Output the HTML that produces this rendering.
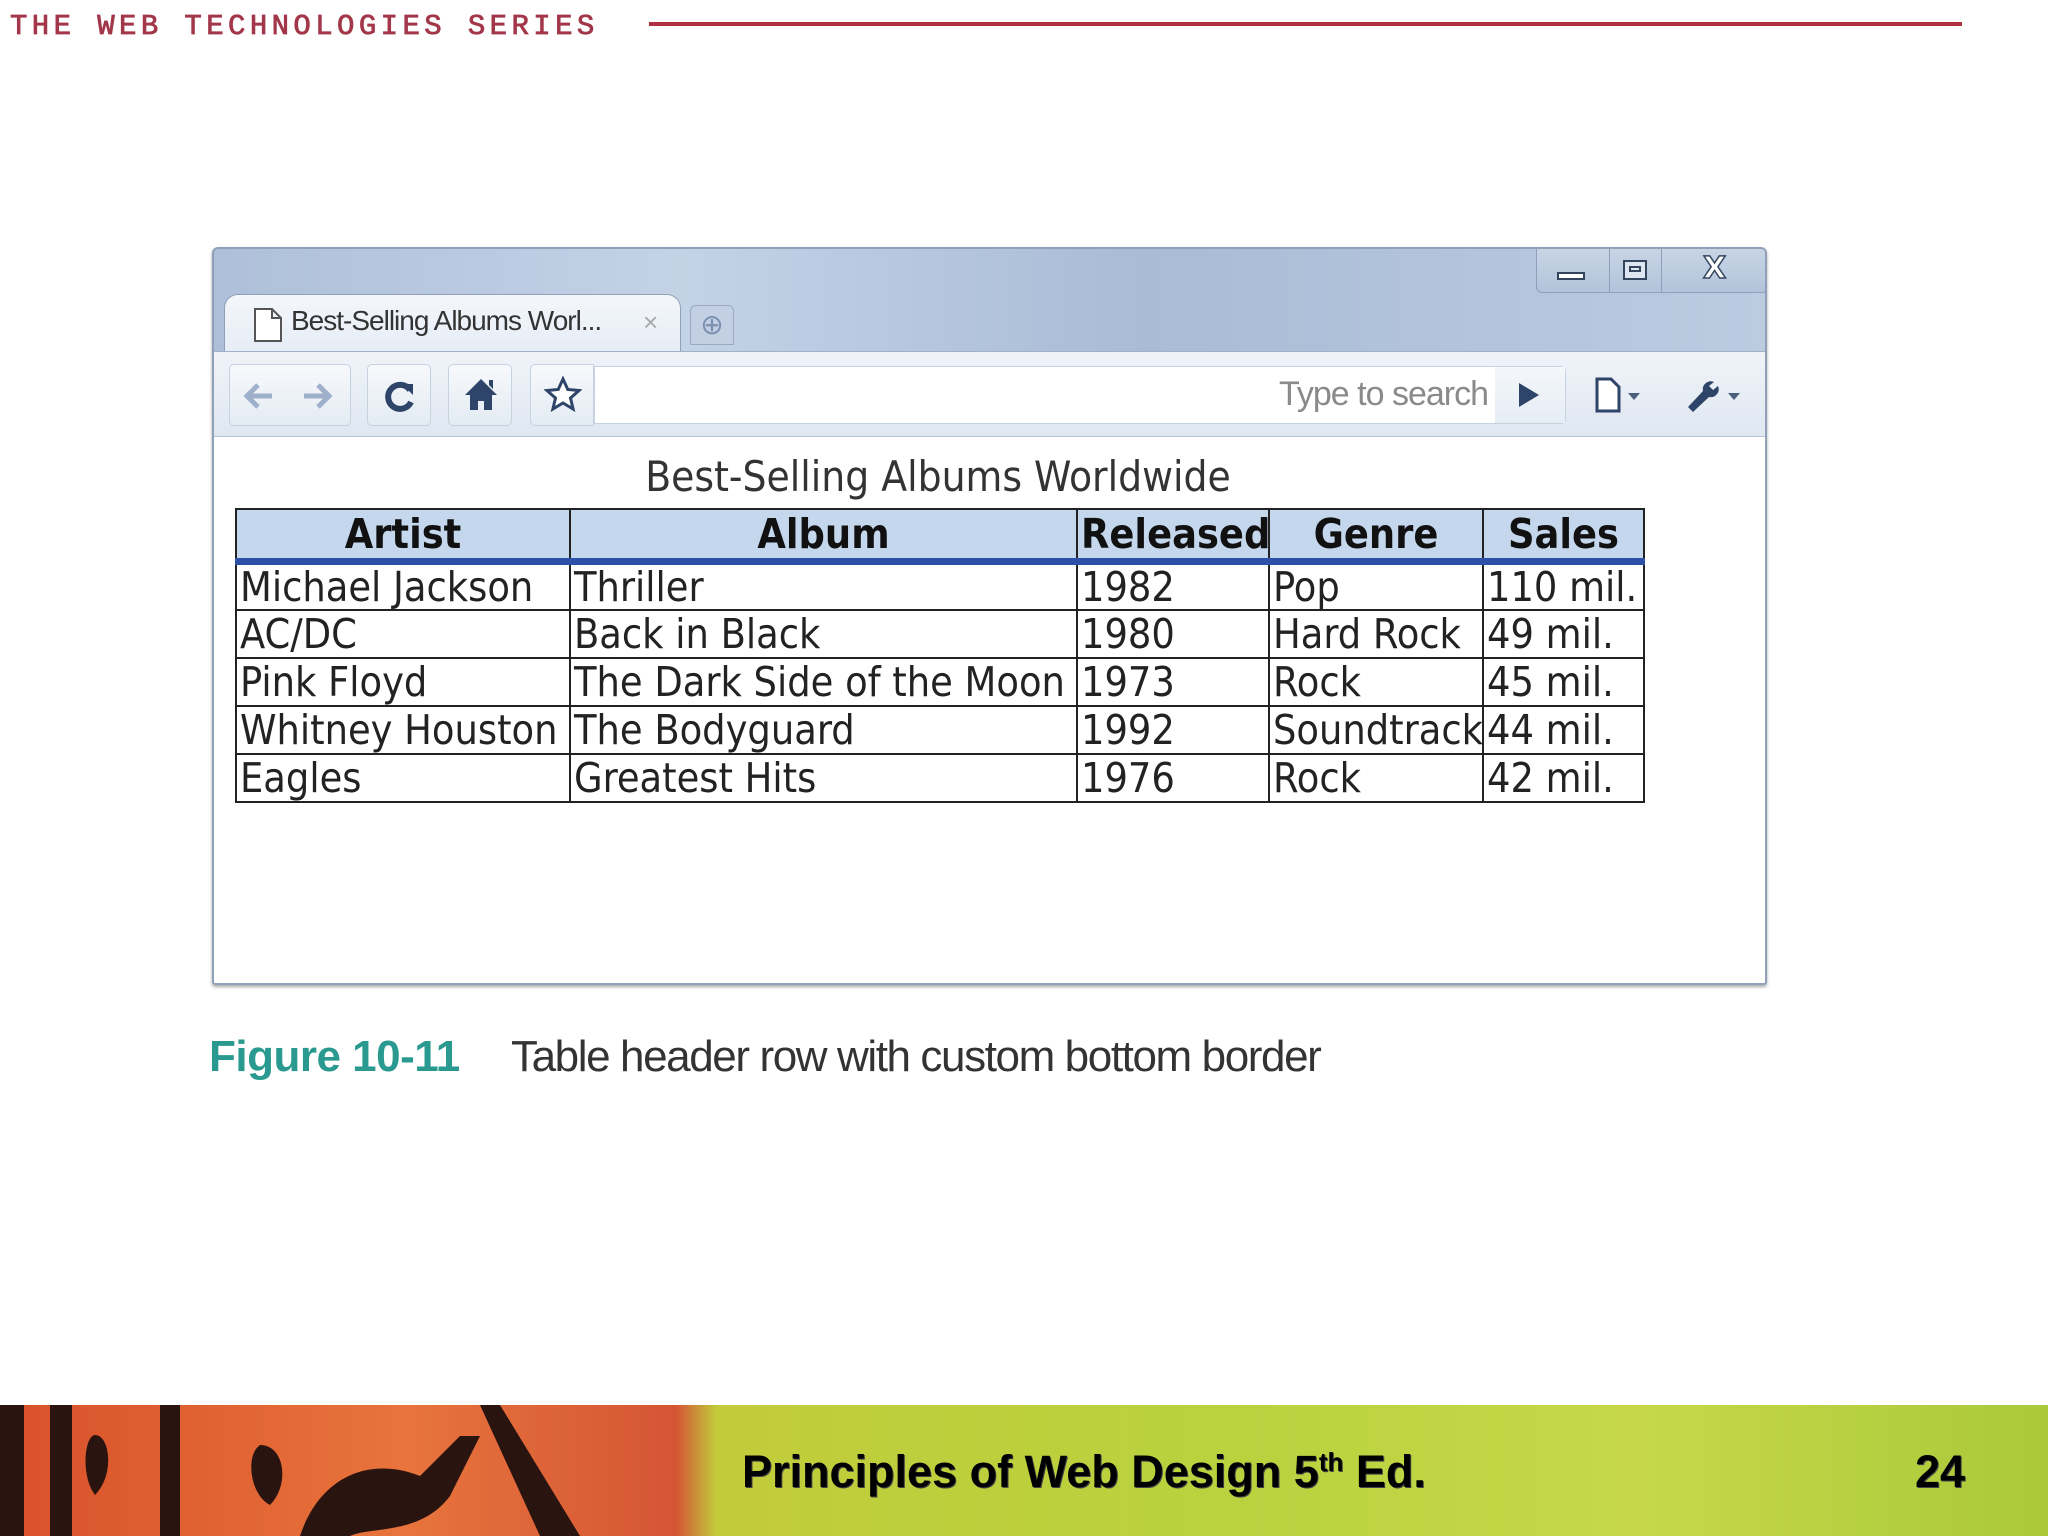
<!DOCTYPE html>
<html><head><meta charset="utf-8"><style>
*{margin:0;padding:0;box-sizing:border-box}
body{width:2048px;height:1536px;background:#fff;position:relative;overflow:hidden;font-family:"Liberation Sans",sans-serif}
.abs{position:absolute}
.hdr{left:10px;top:10px;font:29px "Liberation Mono",monospace;-webkit-text-stroke:0.8px #a3374a;letter-spacing:4.4px;color:#a3374a;white-space:nowrap}
.rline{left:649px;top:22px;width:1313px;height:4px;background:#b0303f}
.win{left:212px;top:247px;width:1555px;height:738px;border:2px solid #8fa0b8;border-radius:6px 6px 3px 3px;background:linear-gradient(90deg,#aebfd9,#c4d2e6 30%,#a9bbd6 60%,#bccbe0);overflow:hidden;box-shadow:0 2px 3px #aaa}
.ctrl{left:1322px;top:-2px;width:232px;height:46px;border:1px solid #8d9fba;border-top:none;border-radius:0 0 6px 6px;background:linear-gradient(#c9d5e6,#b3c3da)}
.tab{left:10px;top:45px;width:457px;height:58px;background:linear-gradient(#f4f7fb,#e6edf6);border:1px solid #8fa0b8;border-bottom:none;border-radius:14px 14px 0 0}
.tb{left:0;top:102px;width:1555px;height:86px;background:linear-gradient(#f0f4f9,#dfe7f1);border-top:1px solid #9fb0c8;border-bottom:1px solid #b8c6d8}
.btn{border:1px solid #c6d2e0;border-radius:5px;background:linear-gradient(#f7f9fc,#e4ebf3);height:62px;top:12px}
.omni{left:380px;top:14px;width:972px;height:58px;background:#fff;border:1px solid #c6d2e0;border-radius:0 5px 5px 0}
.content{left:0;top:188px;width:1555px;height:548px;background:#fff}
table{position:absolute;left:235px;top:508px;border-collapse:collapse;font-family:"DejaVu Sans Condensed","DejaVu Sans",sans-serif;font-size:41px;color:#222;table-layout:fixed}
td,th{border:2px solid #222;padding:0 3px;height:48px;line-height:44px;white-space:nowrap;text-align:left;overflow:hidden}
th{background:#c5d7ed;text-align:center;font-weight:bold;height:52px;border-bottom:7px solid #2c4fa7;color:#111}
.cap{left:540px;top:452px;font:42px "DejaVu Sans Condensed","DejaVu Sans",sans-serif;color:#333;width:796px;text-align:center}
.fig{top:1032px;font-size:44px;white-space:nowrap}
.footer{left:0;top:1405px;width:2048px;height:131px;background:linear-gradient(90deg,#d9502a 0,#e8743c 20%,#d45535 33%,#c2cc3a 35%,#b9d23e 60%,#c6d848 80%,#aac93a 100%)}
.ft{font-weight:bold;font-size:45px;color:#000;top:1446px;text-shadow:1px 1px 0 #444}
</style></head><body>
<div class="abs hdr">THE WEB TECHNOLOGIES SERIES</div>
<div class="abs rline"></div>

<div class="abs win">
 <div class="abs ctrl">
  <div class="abs" style="left:72px;top:0;width:1px;height:45px;background:#8d9fba"></div>
  <div class="abs" style="left:124px;top:0;width:1px;height:45px;background:#8d9fba"></div>
  <div class="abs" style="left:20px;top:25px;width:28px;height:8px;border:2px solid #34455e;background:#fff"></div>
  <div class="abs" style="left:86px;top:13px;width:24px;height:20px;border:2px solid #34455e;background:#dde5f0"><div style="margin:4px;height:6px;border:2px solid #34455e"></div></div>
  <div class="abs" style="left:166px;top:4px;font:bold 30px 'DejaVu Sans',sans-serif;color:#fff;-webkit-text-stroke:1.5px #34455e">X</div>
 </div>
 <div class="abs tab">
  <svg class="abs" style="left:28px;top:12px" width="30" height="36" viewBox="0 0 30 36"><path d="M2 2h17l9 9v23H2z M19 2v9h9" fill="#fff" stroke="#555" stroke-width="2"/></svg>
  <div class="abs" style="left:66px;top:10px;font-size:28px;color:#333;letter-spacing:-1px;white-space:nowrap">Best-Selling Albums Worl...</div>
  <div class="abs" style="left:418px;top:12px;font-size:26px;color:#aaa">×</div>
 </div>
 <div class="abs" style="left:476px;top:56px;width:44px;height:40px;border:1px solid #97a9c3;border-radius:6px 6px 0 0;background:#c3d0e3;color:#7b8fb0;font-size:28px;text-align:center;line-height:38px">⊕</div>
 <div class="abs tb">
  <div class="abs btn" style="left:15px;width:122px"></div>
  <svg class="abs" style="left:28px;top:28px" width="100" height="32"><path d="M30 16H6M16 5L5 16l11 11" fill="none" stroke="#9fb0ca" stroke-width="5"/><path d="M62 16h24M76 5l11 11-11 11" fill="none" stroke="#9fb0ca" stroke-width="5"/></svg>
  <div class="abs btn" style="left:153px;width:64px"></div>
  <svg class="abs" style="left:168px;top:26px" width="36" height="36"><path d="M28 12A12 12 0 1 0 29 24" fill="none" stroke="#2e4468" stroke-width="6"/><path d="M20 6h11v11z" fill="#2e4468"/></svg>
  <div class="abs btn" style="left:234px;width:64px"></div>
  <svg class="abs" style="left:248px;top:24px" width="38" height="38"><path d="M19 3L3 19h5v15h8v-9h6v9h8V19h5zM27 4h4v9l-4-4z" fill="#2e4468"/></svg>
  <div class="abs btn" style="left:316px;width:64px;border-radius:5px 0 0 5px"></div>
  <svg class="abs" style="left:330px;top:24px" width="38" height="38"><path d="M19 3l4.8 10.5 11.2 1-8.5 7.5 2.6 11-10.1-6-10.1 6 2.6-11L3 14.5l11.2-1z" fill="#fff" stroke="#2e4468" stroke-width="3"/></svg>
  <div class="abs omni">
   <div class="abs" style="left:684px;top:8px;font-size:34px;color:#8a8a8a;letter-spacing:-1px;white-space:nowrap">Type to search</div>
   <div class="abs" style="left:900px;top:0;width:70px;height:56px;background:linear-gradient(#f4f7fb,#e6edf5)"></div>
   <svg class="abs" style="left:922px;top:14px" width="24" height="28"><path d="M2 2l20 12L2 26z" fill="#2e4468"/></svg>
  </div>
  <svg class="abs" style="left:1380px;top:24px" width="60" height="40"><path d="M3 3h14l8 8v24H3z" fill="#fff" stroke="#2e4468" stroke-width="3"/><path d="M34 17h12l-6 7z" fill="#4a5d7c"/></svg>
  <svg class="abs" style="left:1470px;top:22px" width="70" height="42"><path d="M30 8a8 8 0 0 0-11 9L4 33l5 5 16-15a8 8 0 0 0 9-11l-5 4-4-4z" fill="#2e4468"/><path d="M44 19h12l-6 7z" fill="#4a5d7c"/></svg>
 </div>
 <div class="abs content"></div>
</div>

<div class="abs cap">Best-Selling Albums Worldwide</div>
<table style="width:1408px">
<colgroup><col style="width:334px"><col style="width:507px"><col style="width:192px"><col style="width:214px"><col style="width:161px"></colgroup>
<tr><th>Artist</th><th>Album</th><th>Released</th><th>Genre</th><th>Sales</th></tr>
<tr><td>Michael Jackson</td><td>Thriller</td><td>1982</td><td>Pop</td><td>110 mil.</td></tr>
<tr><td>AC/DC</td><td>Back in Black</td><td>1980</td><td>Hard Rock</td><td>49 mil.</td></tr>
<tr><td>Pink Floyd</td><td>The Dark Side of the Moon</td><td>1973</td><td>Rock</td><td>45 mil.</td></tr>
<tr><td>Whitney Houston</td><td>The Bodyguard</td><td>1992</td><td>Soundtrack</td><td>44 mil.</td></tr>
<tr><td>Eagles</td><td>Greatest Hits</td><td>1976</td><td>Rock</td><td>42 mil.</td></tr>
</table>

<div class="abs fig" style="left:209px;color:#2a9a90;font-weight:bold;letter-spacing:-0.5px">Figure 10-11</div>
<div class="abs fig" style="left:511px;color:#333;letter-spacing:-1.4px">Table header row with custom bottom border</div>

<div class="abs footer">
 <svg width="720" height="131" style="position:absolute;left:0;top:0"><path d="M0 0h24v131H0zM50 0h22v131H50zM95 30c15 0 20 40 0 60-15-20-10-60 0-60zM160 0h20v131h-20zM300 131c20-60 70-80 120-60l40-40h20l-30 60c-30 40-80 30-100 40z M260 40c25 0 30 40 10 60-20-10-25-50-10-60z M480 0h20l80 131h-40z" fill="#2a1410"/></svg>
</div>
<div class="abs ft" style="left:742px">Principles of Web Design 5<sup style="font-size:26px">th</sup> Ed.</div>
<div class="abs ft" style="left:1915px">24</div>
</body></html>
